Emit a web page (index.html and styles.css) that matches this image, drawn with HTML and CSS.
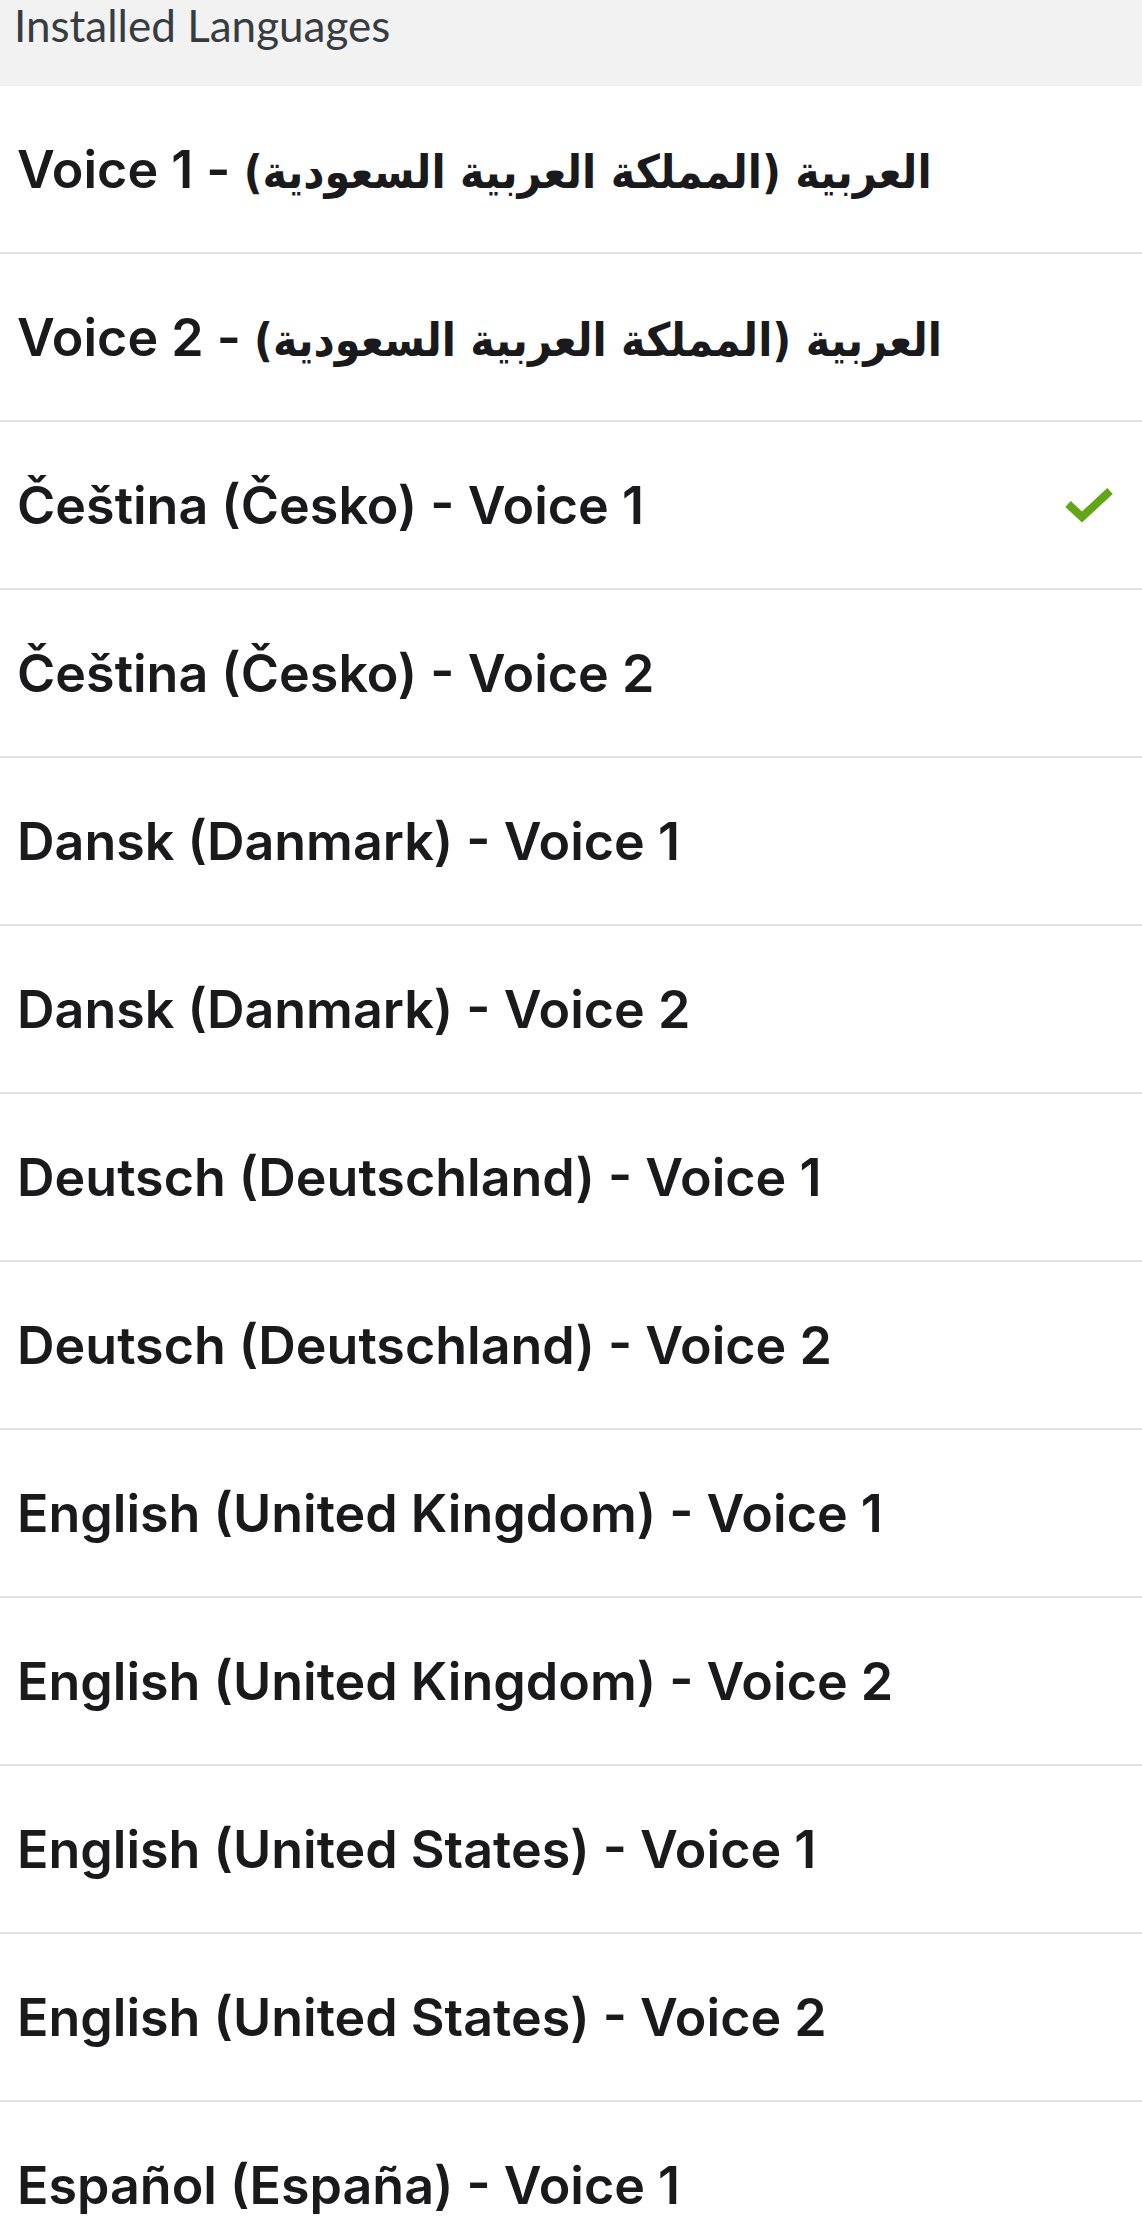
FILE: index.html
```html
<html>
<head>
<meta charset="utf-8">
<link rel="stylesheet" href="styles.css">
</head>
<body>
<div class="section-head">Installed Languages</div>

<ul class="voices">
  <li class="voice"><span class="voice-name" dir="rtl"><span class="ar">العربية (المملكة العربية السعودية)</span> - Voice 1</span></li>
  <li class="voice"><span class="voice-name" dir="rtl"><span class="ar">العربية (المملكة العربية السعودية)</span> - Voice 2</span></li>
  <li class="voice selected">
    <span class="voice-name">Čeština (Česko) - Voice 1</span>
    <svg class="tick" width="48" height="36" viewBox="0 0 48 36">
      <path d="M3 17 L17 30 L45 4" fill="none" stroke="#62a617" stroke-width="8"/>
    </svg>
  </li>
  <li class="voice"><span class="voice-name">Čeština (Česko) - Voice 2</span></li>
  <li class="voice"><span class="voice-name">Dansk (Danmark) - Voice 1</span></li>
  <li class="voice"><span class="voice-name">Dansk (Danmark) - Voice 2</span></li>
  <li class="voice"><span class="voice-name">Deutsch (Deutschland) - Voice 1</span></li>
  <li class="voice"><span class="voice-name">Deutsch (Deutschland) - Voice 2</span></li>
  <li class="voice"><span class="voice-name">English (United Kingdom) - Voice 1</span></li>
  <li class="voice"><span class="voice-name">English (United Kingdom) - Voice 2</span></li>
  <li class="voice"><span class="voice-name">English (United States) - Voice 1</span></li>
  <li class="voice"><span class="voice-name">English (United States) - Voice 2</span></li>
  <li class="voice"><span class="voice-name">Español (España) - Voice 1</span></li>
</ul>
</body>
</html>
```

FILE: styles.css
```css
body {
  margin: 0;
  background: #fff;
  overflow: hidden;
}

.section-head {
  height: 86px;
  box-sizing: border-box;
  padding: 0 0 0 14px;
  background: #f2f2f2;
  color: #373c41;
  font: 44px/50px Lato, "Open Sans", sans-serif;
}

.voices {
  list-style: none;
  margin: 0;
  padding: 0;
}

.voice {
  display: flex;
  align-items: center;
  justify-content: space-between;
  height: 166px;
  padding: 0 29px 0 17px;
  border-bottom: 2px solid #e2e2e2;
  color: #1a1a1c;
  font: 600 52px Inter, "DejaVu Sans", sans-serif;
}

.voice-name {
  white-space: nowrap;
  text-align: left;
}

/* arabic run: no Geeza Pro here, the condensed DejaVu is closest in width */
.voice-name .ar {
  font: bold 46px "DejaVu Sans Condensed", "DejaVu Sans", sans-serif;
}

.tick {
  display: block;
  flex: none;
}
```
